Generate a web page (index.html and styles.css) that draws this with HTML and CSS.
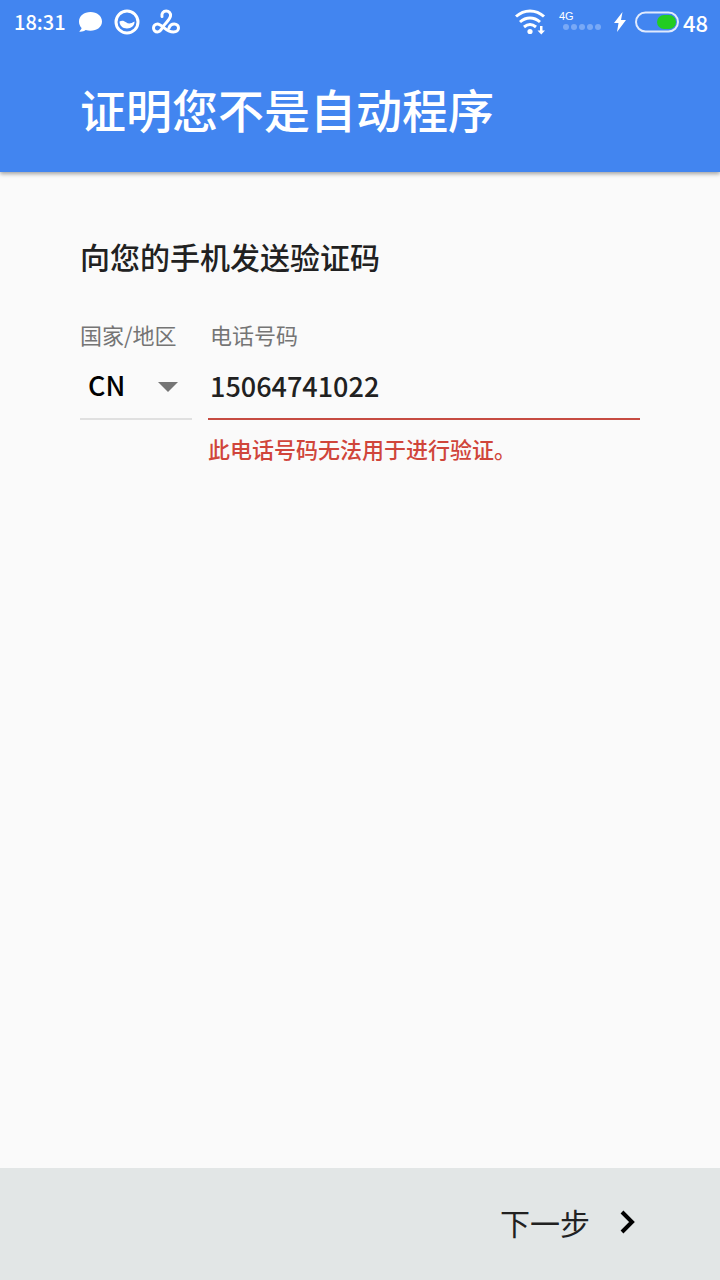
FILE: index.html
```
<!DOCTYPE html>
<html lang="zh-CN">
<head>
<meta charset="UTF-8">
<meta name="viewport" content="width=device-width, initial-scale=1.0">
<title>证明您不是自动程序</title>
<link rel="stylesheet" href="styles.css">
</head>
<body>

<header class="header">
    <div class="status-bar">
        <div class="status-left">
            <span>18:31</span>
            <svg width="24" height="22" viewBox="0 0 24 22" aria-hidden="true">
                <path fill="#fff" d="M12.500 1C6 1 1 5 1 10.500c0 2.700 1 4.800 2.600 6.500-.3 1.200-1.200 2.500-2.600 3.600 2.700.3 5-.3 6.700-1.600 1.500.6 3.100.8 4.800.8 6.500 0 11.500-3.900 11.500-9.300S19 1 12.500 1z"/>
            </svg>
            <svg width="26" height="26" viewBox="0 0 26 26" aria-hidden="true">
                <circle cx="13" cy="13" r="11" fill="none" stroke="#fff" stroke-width="3"/>
                <path fill="#fff" d="M5.500 12.500c2.500-1.500 4.500-.8 6.500.7 2.500 1.900 5 1.500 8.500-.7.3 4-3.200 7-7.500 7s-7.500-2.800-7.500-7z"/>
            </svg>
            <svg width="28" height="26" viewBox="0 0 28 26" aria-hidden="true">
                <path fill="none" stroke="#fff" stroke-width="3" stroke-linecap="round" stroke-linejoin="round" d="M10 7.500C9.300 4.500 11.300 2 14.200 2c2.800 0 4.800 2.200 4.300 5C17.900 10.500 14 13.500 11.500 17c-1.800 2.800-3 6-6 6-2.300 0-4-1.700-4-4 0-2.400 1.800-4 4-4 4.500 0 8 8 16 8 3 0 5-1.600 5-4 0-2.300-1.800-4-4.200-4-2.600 0-4.600 1.800-5.300 4"/>
            </svg>
        </div>
        <div class="status-right">
            <svg width="32" height="28" viewBox="0 0 32 28" aria-hidden="true">
                <g fill="none" stroke="#fff" stroke-width="3">
                    <path d="M1 8.500C9 1 21 1 29 8.500"/>
                    <path d="M5 14c6-5.300 14-5.300 20 0"/>
                    <path d="M9 19c3.800-3.200 8.200-3.200 12 0"/>
                </g>
                <circle cx="15" cy="23.500" r="2.600" fill="#fff"/>
                <path fill="#fff" d="M25 18h2.500v4.500H30l-3.700 4-3.800-4H25z"/>
            </svg>
            <div class="signal">
                <span>4G</span>
                <svg width="38" height="8" viewBox="0 0 38 8" aria-hidden="true">
                    <g fill="#79a9f6">
                        <circle cx="3" cy="4" r="3"/>
                        <circle cx="11" cy="4" r="3"/>
                        <circle cx="19" cy="4" r="3"/>
                        <circle cx="27" cy="4" r="3"/>
                        <circle cx="35" cy="4" r="3"/>
                    </g>
                </svg>
            </div>
            <svg width="14" height="20" viewBox="0 0 14 20" aria-hidden="true">
                <path fill="#fff" d="M9.500 0L1 11h4.500L4 20l9-12H8z"/>
            </svg>
            <div class="battery">
                <svg width="44" height="22" viewBox="0 0 44 22" aria-hidden="true">
                    <rect x="1" y="1.500" width="42" height="19" rx="9.500" fill="none" stroke="#e0eafd" stroke-width="2"/>
                    <rect x="22" y="4" width="19" height="14" rx="7" fill="#22cc22"/>
                </svg>
                <span>48</span>
            </div>
        </div>
    </div>
    <h1 class="title">证明您不是自动程序</h1>
</header>

<form class="page" id="verifyForm">
    <main class="content">
        <h2 class="subtitle">向您的手机发送验证码</h2>
        <div class="fields">
            <div class="field field-country">
                <label for="country">国家/地区</label>
                <div class="select-wrap">
                    <select id="country">
                        <option>CN</option>
                    </select>
                    <svg class="caret" width="20" height="10" viewBox="0 0 20 10" aria-hidden="true">
                        <path fill="#757575" d="M0 0h20L10 10z"/>
                    </svg>
                </div>
            </div>
            <div class="field field-phone">
                <label for="phone">电话号码</label>
                <input id="phone" type="tel" value="15064741022" aria-describedby="phoneError">
                <p class="error" id="phoneError">此电话号码无法用于进行验证。</p>
            </div>
        </div>
    </main>
    <footer class="footer">
        <button class="next" type="button">
            下一步
            <svg width="16" height="24" viewBox="0 0 16 24" aria-hidden="true">
                <path fill="none" stroke="#000" stroke-width="4" d="M2 2l10 10L2 22"/>
            </svg>
        </button>
    </footer>
</form>

</body>
</html>
```

FILE: styles.css
```
* {
    box-sizing: border-box;
}

body {
    margin: 0;
    min-height: 100vh;
    display: flex;
    flex-direction: column;
    background-color: #fafafa;
    color: #212121;
    font-family: "Noto Sans CJK SC", sans-serif;
}

svg {
    display: block;
    flex: none;
}

.header {
    background-color: #4285f0;
    color: #fff;
    padding-bottom: 32px;
    box-shadow: 0 2px 4px rgba(0, 0, 0, 0.35);
}

.status-bar {
    height: 44px;
    padding: 0 12px 0 14px;
    display: flex;
    align-items: center;
    justify-content: space-between;
    font-size: 20px;
    line-height: 24px;
    font-weight: 500;
}

.status-left {
    display: flex;
    align-items: center;
    gap: 12px;
}

.status-right {
    display: flex;
    align-items: center;
    gap: 12px;
}

.signal {
    display: flex;
    flex-direction: column;
    padding-bottom: 4px;
    font-family: "Liberation Sans", sans-serif;
    font-size: 11px;
    line-height: 14px;
}

.signal svg {
    margin-left: 4px;
}

.battery {
    display: flex;
    align-items: center;
    gap: 4px;
    margin-left: -4px;
    font-size: 22px;
}

.title {
    margin: 0;
    padding: 32px 80px 0;
    font-size: 46px;
    line-height: 64px;
    font-weight: 500;
}

.page {
    flex: 1;
    display: flex;
    flex-direction: column;
}

.content {
    flex: 1;
    padding: 62px 80px;
}

.subtitle {
    margin: 0 0 40px;
    font-size: 30px;
    line-height: 44px;
    font-weight: 500;
}

.fields {
    display: flex;
    align-items: flex-start;
    gap: 16px;
}

.field {
    display: flex;
    flex-direction: column;
}

.field-country {
    width: 112px;
}

.field-phone {
    flex: 1;
    min-width: 0;
}

.field label {
    font-size: 22px;
    line-height: 32px;
    color: #757575;
    white-space: nowrap;
}

.field-phone label {
    padding-left: 2px;
}

.field select,
.field input {
    width: 100%;
    height: 70px;
    margin: 0;
    border: 0;
    border-radius: 0;
    outline: none;
    background: transparent;
    font-family: inherit;
    font-size: 27px;
    font-weight: 500;
    color: #212121;
}

.select-wrap {
    display: grid;
    align-items: center;
    border-bottom: 2px solid #e0e0e0;
}

.select-wrap select {
    grid-area: 1 / 1;
    height: 68px;
    padding: 0 8px;
    appearance: none;
    color: #000;
}

.caret {
    grid-area: 1 / 1;
    justify-self: end;
    margin: 6px 14px 0 0;
    pointer-events: none;
}

.field input {
    padding: 2px 2px 0;
    border-bottom: 2px solid #c64b41;
}

.error {
    margin: 12px 0 0;
    font-size: 22px;
    line-height: 32px;
    font-weight: 500;
    color: #d0453a;
}

.footer {
    height: 112px;
    padding: 0 80px;
    display: flex;
    align-items: center;
    justify-content: flex-end;
    background-color: #e2e6e6;
}

.next {
    display: flex;
    align-items: center;
    gap: 30px;
    padding: 0 4px 4px 0;
    border: 0;
    background: transparent;
    font-family: inherit;
    font-size: 30px;
    line-height: 44px;
    color: #212121;
    cursor: pointer;
}
```
